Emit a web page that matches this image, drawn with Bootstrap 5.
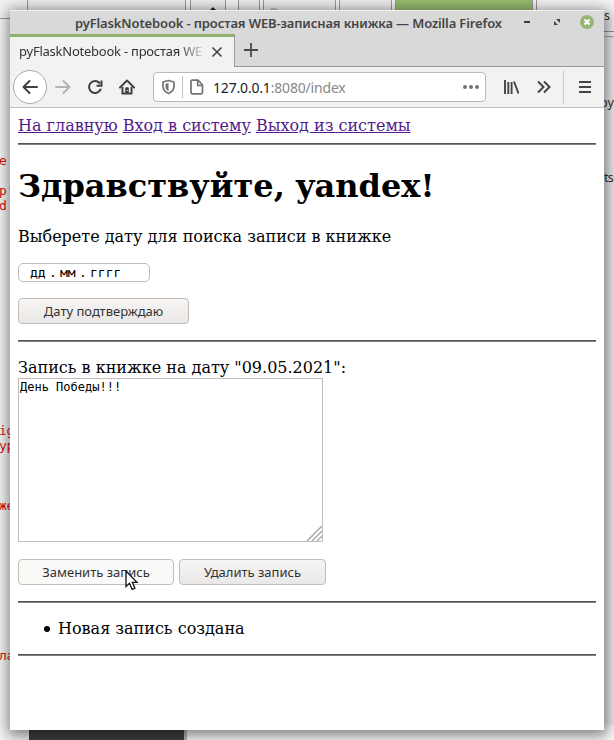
<!DOCTYPE html>
<html lang="ru">
<head>
<meta charset="utf-8">
<title>pyFlaskNotebook - простая WEB-записная книжка</title>
<link rel="stylesheet" href="https://cdn.jsdelivr.net/npm/bootstrap@5.3.0/dist/css/bootstrap.min.css">
<style>
body{width:614px;height:740px;overflow:hidden;background:#fff;font-family:"Noto Sans","Open Sans",sans-serif}
.desk{width:614px;height:740px;background:#f8f8f8}
.pane,.code,.side{position:absolute}
.pane{border:solid #999;border-width:0 1px;background:#f0f0f0;top:0;height:37px}
.code{left:-1px;font:13px/15px "DejaVu Sans Mono",monospace;color:#e01010;white-space:pre;letter-spacing:-.3px}
.side{font-size:12.5px;line-height:16px;color:#333}
.win{position:absolute;left:10px;top:10px;width:594px;height:720px;box-shadow:1px 3px 14px 3px rgba(0,0,0,.5)}
.titlebar{height:24px;background:#d9d9d9;border-top:1px solid #f0f0f0;color:#454545}
.caption{position:absolute;left:65px;top:2px;font-size:13px;line-height:20px;font-weight:600;white-space:nowrap;letter-spacing:-.14px}
.tabs{height:33px;background:#d9d9d9}
.tab-on{width:225px;background:#f2f2f2;border-top:3px solid #8fb16d;border-right:1px solid #9b9b9b;box-shadow:0 -1px #999;font-size:13px;color:#333;padding-left:9px}
.tab-name{width:188px;overflow:hidden;white-space:nowrap;letter-spacing:-.24px;-webkit-mask-image:linear-gradient(90deg,#000 160px,transparent 188px);mask-image:linear-gradient(90deg,#000 160px,transparent 188px)}
.tab-rest{border-bottom:1px solid #999;padding-left:8px}
.tools{height:41px;background:#f2f2f2;border-bottom:1px solid #c2c2c2;padding-left:3px}
.back{width:34px;height:34px;background:#fff;border:1px solid #aaa}
.url{width:333px;height:30px;background:#fff;border:1px solid #b9b9b9;border-radius:4px;font-size:14px;color:#222;margin-left:18px;padding-left:7px}
.url-text{letter-spacing:-.18px}
.url-sep{width:1px;height:22px;background:#c2c2c2;margin:0 6px}
.doc{height:622px;background:#fff;color:#000;padding:8px;font:16px/19px "DejaVu Serif",serif}
.doc a{color:#551a8b}
.doc h1{font:bold 32px/38px "DejaVu Serif",serif;margin:22px 0 22px}
.doc p{margin:0}
.line{height:2px;background:linear-gradient(#565656 50%,#818181 50%)}
.date{width:132px;height:19px;border:1px solid #c4bdb7;border-radius:5px;font:13px/18px "DejaVu Sans Mono",monospace;padding-left:11px;white-space:pre;margin-top:17px}
.date span{width:16px}
.date i{width:14px;font-style:normal;text-align:center}
.gbtn{height:26px;border:1px solid #c4bdb7;border-radius:4px;background:linear-gradient(#f6f5f4,#eae8e6);font:13px/24px "Noto Sans",sans-serif;color:#333;padding:0;text-align:center;white-space:nowrap}
.memo{display:block;width:305px;height:164px;border:1px solid #c4bdb7;border-radius:0;padding:1px;font:12px/15px "DejaVu Sans Mono",monospace;color:#000;position:relative}
.grip{position:absolute;right:0;bottom:0}
.note{margin:16px 0;padding-left:40px;list-style:none}
.note li{position:relative}
.note li::before{content:"";position:absolute;left:-14px;top:7px;width:6px;height:6px;border-radius:50%;background:#000}
.mouse{position:absolute;left:115px;top:560px}
svg{display:block;flex:none}
</style>
</head>
<body>
<div class="desk position-relative overflow-hidden">
  <div class="pane" style="left:-2px;width:30px;height:19px;background:#f4f4f4;border-bottom:1px solid #999"></div>
  <div class="pane" style="left:28px;width:158px;border-left:0"></div>
  <div class="pane" style="left:190px;width:36px"></div>
  <div class="pane" style="left:238px;width:22px"></div>
  <div class="pane" style="left:263px;width:73px"></div>
  <div class="pane" style="left:339px;width:53px"></div>
  <div class="pane" style="left:395px;width:138px;background:#98bf70"></div>
  <div class="pane" style="left:536px;width:90px;height:32px;background:#f7f7f7;border-bottom:1px solid #999"></div>
  <div class="pane" style="left:590px;width:34px;top:36px;height:704px;border-top:1px solid #aaa;background:#f4f4f4"></div>
  <svg class="position-absolute" style="left:205px;top:6px" width="90" height="8" viewBox="0 0 90 8"><path d="M5 4l3-3 3 3z" fill="#222"/><path d="M66 8V3h5l1 2h7" fill="none" stroke="#999"/></svg>
  <div class="pane" style="left:29px;width:155px;top:725px;height:15px;background:#3f3f3f;border:0"></div>
  <div class="pane" style="left:184px;width:440px;top:725px;height:15px;background:#fff;border-width:0 0 0 3px;border-color:#bbb"></div>
  <div class="code" style="top:153px">e</div>
  <div class="code" style="top:183px">p'</div>
  <div class="code" style="top:198px">d</div>
  <div class="code" style="top:423px">ig</div>
  <div class="code" style="top:438px">yp</div>
  <div class="code" style="top:498px">же</div>
  <div class="code" style="top:648px">ла</div>
  <div class="side" style="left:597px;top:8px">es</div>
  <div class="side" style="left:600px;top:95px">py</div>
  <div class="side" style="left:604px;top:170px;letter-spacing:-.8px">ts</div>

  <div class="win d-flex flex-column">
    <div class="titlebar d-flex position-relative">
      <div class="caption">pyFlaskNotebook - простая WEB-записная книжка — Mozilla Firefox</div>
      <svg class="ms-auto" style="margin-right:10px" width="84" height="24" viewBox="0 0 84 24"><path d="M14 11h6" stroke="#3c3c3c" stroke-width="2"/><path d="M46 8h4v4zM44 10v4h4z" fill="#444"/><circle cx="77" cy="11" r="7" fill="#95b673"/><path d="M74.500 8.500l5 5m0-5l-5 5" stroke="#fff" stroke-width="1.900"/></svg>
    </div>
    <div class="tabs d-flex">
      <div class="tab-on d-flex align-items-center">
        <div class="tab-name">pyFlaskNotebook - простая WE</div>
        <svg class="ms-1" width="12" height="12" viewBox="0 0 12 12"><path d="M1.500 1.500l9 9m0-9l-9 9" stroke="#444" stroke-width="1.600"/></svg>
      </div>
      <div class="tab-rest flex-grow-1 d-flex align-items-center">
        <svg width="16" height="16" viewBox="0 0 16 16"><path d="M1 8h14M8 1v14" stroke="#4a4a4a" stroke-width="1.800"/></svg>
      </div>
    </div>
    <div class="tools d-flex align-items-center">
      <div class="back rounded-circle d-flex align-items-center justify-content-center">
        <svg width="16" height="16" viewBox="0 0 16 16" fill="none" stroke="#404040" stroke-width="2" stroke-linecap="round" stroke-linejoin="round"><path d="M15 8H1.500M7.500 2l-6 6 6 6"/></svg>
      </div>
      <svg style="margin-left:8px" width="16" height="16" viewBox="0 0 16 16" fill="none" stroke="#b3b3b3" stroke-width="2" stroke-linecap="round" stroke-linejoin="round"><path d="M1 8h13.500M8.500 2l6 6-6 6"/></svg>
      <svg style="margin-left:16px" width="16" height="16" viewBox="0 0 16 16" fill="none" stroke="#404040" stroke-width="2" stroke-linecap="round"><path d="M12.500 4A6 6 0 1 0 13.500 10.500"/><path d="M14.500 1.500v5.200H9.500" stroke-linecap="butt"/></svg>
      <svg style="margin-left:16px" width="16" height="16" viewBox="0 0 16 16"><path d="M1 8.500L8 1.500l7 7" fill="none" stroke="#404040" stroke-width="2" stroke-linecap="round" stroke-linejoin="round"/><path d="M3.500 8v6.500h9V8" fill="none" stroke="#404040" stroke-width="2"/><path d="M6.200 14V9.200a1 1 0 0 1 1-1h1.600a1 1 0 0 1 1 1V14z" fill="#404040"/><circle cx="8.300" cy="11.500" r=".6" fill="#fff"/></svg>
      <div class="url d-flex align-items-center">
        <svg width="15" height="16" viewBox="0 0 15 16"><path d="M7.500 1.500L13 3v4.500c0 3.300-2.400 5.500-5.500 7-3.100-1.500-5.500-3.700-5.500-7V3z" fill="none" stroke="#737373" stroke-width="1.700" stroke-linejoin="round"/><path d="M7.500 4v8.200C5.300 11 4.500 9.600 4.500 7.500V4.800z" fill="#737373"/></svg>
        <div class="url-sep"></div>
        <svg width="16" height="16" viewBox="0 0 16 16" fill="none" stroke="#737373" stroke-width="1.700" stroke-linejoin="round"><path d="M3 1.200h6L13.500 6v7.500a1.300 1.300 0 0 1-1.300 1.300H3.300A1.300 1.300 0 0 1 2 13.500V2.200a1 1 0 0 1 1-1z"/><path d="M8.700 1.500v5h4.800"/></svg>
        <span class="url-text ms-2">127.0.0.1<span style="color:#888">:8080/index</span></span>
        <svg class="ms-auto" style="margin-right:5px" width="18" height="6" viewBox="0 0 18 6" fill="#737373"><circle cx="3" cy="3" r="2"/><circle cx="9" cy="3" r="2"/><circle cx="15" cy="3" r="2"/></svg>
      </div>
      <svg style="margin-left:17px" width="17" height="16" viewBox="0 0 17 16" stroke="#444" stroke-width="1.900"><path d="M2 1v14M5.300 3v12M8.600 3v12M11 2.500l4.500 12"/></svg>
      <svg style="margin-left:16px" width="16" height="14" viewBox="0 0 16 14" fill="none" stroke="#444" stroke-width="2"><path d="M2 1.500L7.500 7 2 12.500M8 1.500L13.500 7 8 12.500"/></svg>
      <div style="width:1px;height:34px;background:#ccc;margin-left:11px"></div>
      <svg style="margin-left:15px" width="13" height="14" viewBox="0 0 13 14" stroke="#444" stroke-width="2"><path d="M0 2h12M0 7h12M0 12h12"/></svg>
    </div>
    <div class="doc">
      <nav class="d-flex text-nowrap" style="gap:5px"><a href="#">На главную</a><a href="#">Вход в систему</a><a href="#">Выход из системы</a></nav>
      <div class="line mt-2"></div>
      <h1>Здравствуйте, yandex!</h1>
      <p>Выберете дату для поиска записи в книжке</p>
      <div class="date d-flex"><span>дд</span><i>.</i><span>мм</span><i>.</i><span>гггг</span></div>
      <button class="gbtn d-block" style="width:171px;margin-top:16px">Дату подтверждаю</button>
      <div class="line mt-3 mb-3"></div>
      <p>Запись в книжке на дату "09.05.2021":</p>
      <div class="memo" style="margin-top:1px">День Победы!!!
        <svg class="grip" width="16" height="15" viewBox="0 0 16 15" stroke="#aaa" stroke-width="1.500"><path d="M1 15L16 0M6 15L16 5M11 15l5-5"/></svg>
      </div>
      <div class="d-flex" style="gap:5px;margin-top:17px">
        <button class="gbtn" style="width:156px;background:#f9f9f8">Заменить запись</button>
        <button class="gbtn" style="width:147px">Удалить запись</button>
      </div>
      <div class="line mt-3"></div>
      <ul class="note"><li>Новая запись создана</li></ul>
      <div class="line"></div>
    </div>
    <svg class="mouse" width="14" height="22" viewBox="0 0 14 22"><path d="M1 1v15.500l3.500-3.200 2.600 6 2.800-1.200-2.600-5.800H12z" fill="#fff" stroke="#111" stroke-width="1.300"/></svg>
  </div>
</div>
<script src="https://cdn.jsdelivr.net/npm/bootstrap@5.3.0/dist/js/bootstrap.bundle.min.js"></script>
</body>
</html>
